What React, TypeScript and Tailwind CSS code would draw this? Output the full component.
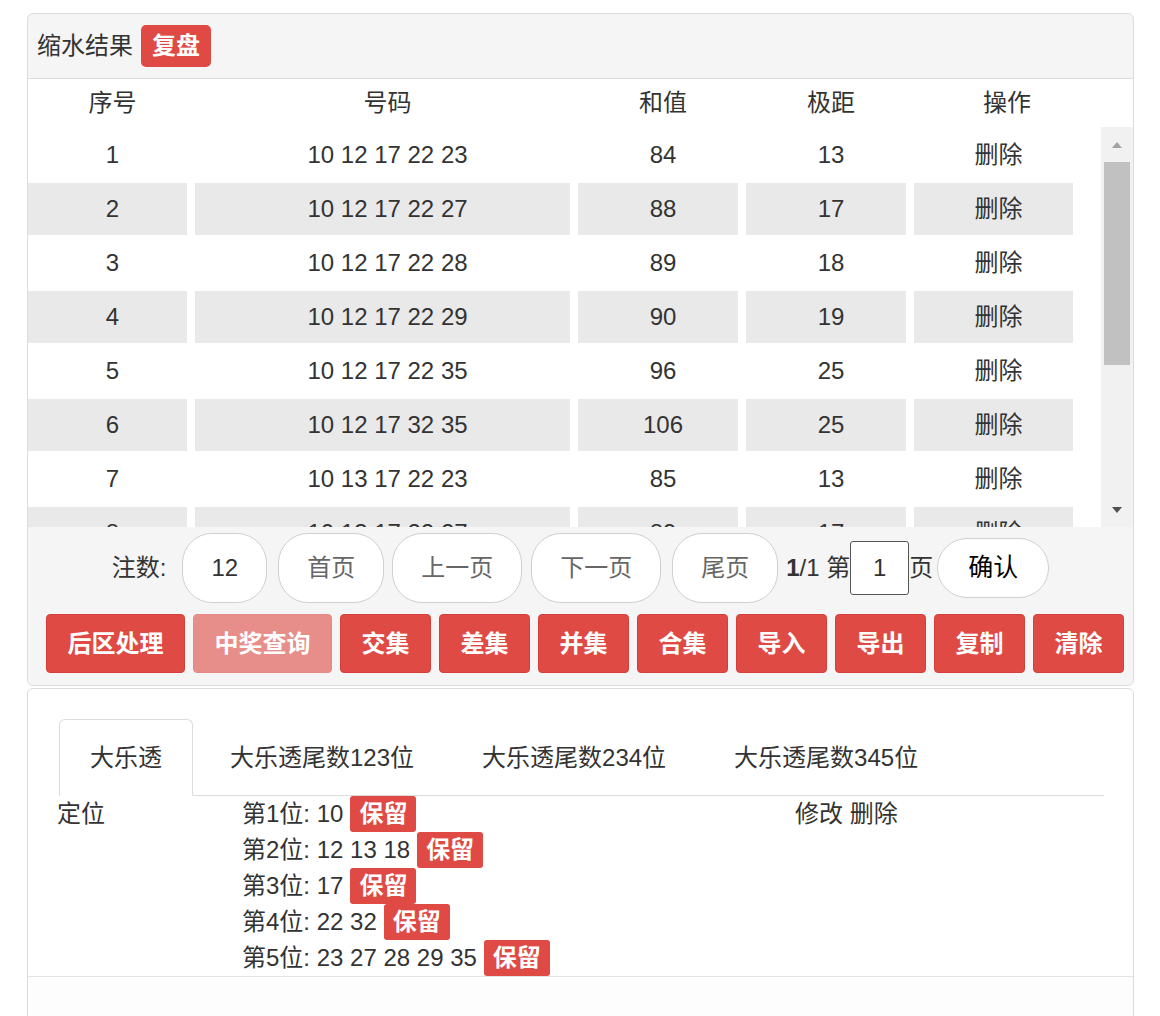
const rows = [
  { n: 1, code: '10 12 17 22 23', sum: 84, range: 13 },
  { n: 2, code: '10 12 17 22 27', sum: 88, range: 17 },
  { n: 3, code: '10 12 17 22 28', sum: 89, range: 18 },
  { n: 4, code: '10 12 17 22 29', sum: 90, range: 19 },
  { n: 5, code: '10 12 17 22 35', sum: 96, range: 25 },
  { n: 6, code: '10 12 17 32 35', sum: 106, range: 25 },
  { n: 7, code: '10 13 17 22 23', sum: 85, range: 13 },
  { n: 8, code: '10 13 17 22 27', sum: 89, range: 17 },
];

const actions = [
  { label: '后区处理', wide: true },
  { label: '中奖查询', wide: true, disabled: true },
  { label: '交集' },
  { label: '差集' },
  { label: '并集' },
  { label: '合集' },
  { label: '导入' },
  { label: '导出' },
  { label: '复制' },
  { label: '清除' },
];

const positions = [
  { label: '第1位', nums: '10' },
  { label: '第2位', nums: '12 13 18' },
  { label: '第3位', nums: '17' },
  { label: '第4位', nums: '22 32' },
  { label: '第5位', nums: '23 27 28 29 35' },
];

const tabs = ['大乐透', '大乐透尾数123位', '大乐透尾数234位', '大乐透尾数345位'];

function Pill({ children, dark = false, className = '' }: { children: React.ReactNode; dark?: boolean; className?: string }) {
  return (
    <button
      className={`h-[70px] px-[28px] rounded-[30px] border border-[#cfcfcf] bg-white ${dark ? 'text-[#333]' : 'text-[#666]'} ${className}`}
    >
      {children}
    </button>
  );
}

export default function App() {
  return (
    <div className="min-h-screen bg-white pt-[13px] pl-[27px] pr-[26px] font-[family-name:'Liberation_Sans','Noto_Sans_CJK_SC',sans-serif] text-[24px] text-[#333]">
      {/* result card */}
      <div className="rounded-[6px] border border-[#dcdcdc] overflow-hidden bg-[#f5f5f5]">
        <div className="h-[65px] flex items-center pl-[9px] border-b border-[#dcdcdc]">
          <span>缩水结果</span>
          <span className="ml-[8px] h-[42px] px-[11px] flex items-center rounded-[5px] bg-[#df4a44] text-white font-bold">
            复盘
          </span>
        </div>

        <div className="bg-white">
          <div className="h-[48px] grid grid-cols-[159px_375px_160px_160px_176px] gap-x-2 items-center">
            <div className="text-center pl-[10px]">序号</div>
            <div className="text-center pl-[10px]">号码</div>
            <div className="text-center pl-[10px]">和值</div>
            <div className="text-center pl-[10px]">极距</div>
            <div className="text-center pl-[10px]">操作</div>
          </div>

          <div className="flex h-[400px]">
            <div className="flex-1 overflow-hidden pt-[2px]">
              {rows.map((r) => {
                const cell = `h-[52px] flex items-center justify-center pl-[10px] ${r.n % 2 === 0 ? 'bg-[#e9e9ea]' : ''}`;
                return (
                  <div key={r.n} className="grid grid-cols-[159px_375px_160px_160px_159px] gap-x-2 mb-[2px]">
                    <div className={cell}>{r.n}</div>
                    <div className={cell}>{r.code}</div>
                    <div className={cell}>{r.sum}</div>
                    <div className={cell}>{r.range}</div>
                    <div className={cell}>删除</div>
                  </div>
                );
              })}
            </div>
            <div className="w-[32px] bg-[#f1f1f1] flex flex-col">
              <div className="h-[35px] flex items-center justify-center">
                <svg width="12" height="8" viewBox="0 0 12 8">
                  <path d="M6 1 L11 7 L1 7 Z" fill="#a3a3a3" />
                </svg>
              </div>
              <div className="h-[203px] mx-[3px] bg-[#c1c1c1]" />
              <div className="flex-1" />
              <div className="h-[35px] flex items-center justify-center">
                <svg width="12" height="8" viewBox="0 0 12 8">
                  <path d="M1 1 L11 1 L6 7 Z" fill="#505050" />
                </svg>
              </div>
            </div>
          </div>
        </div>

        <div className="pt-[6px] pb-[12px]">
          <div className="flex items-center justify-center h-[70px]">
            <span className="mr-[16px]">注数:</span>
            <Pill dark>12</Pill>
            <Pill className="ml-[11px]">首页</Pill>
            <Pill className="ml-[8px]">上一页</Pill>
            <Pill className="ml-[9px]">下一页</Pill>
            <Pill className="ml-[11px]">尾页</Pill>
            <span className="ml-[8px]">
              <b>1</b>/1 第
            </span>
            <span className="w-[59px] h-[54px] flex items-center justify-center border border-[#555] rounded-[3px] bg-white">
              1
            </span>
            <span>页</span>
            <button className="ml-[4px] h-[60px] w-[112px] rounded-[30px] border border-[#cfcfcf] bg-white text-black text-[25px]">
              确认
            </button>
          </div>

          <div className="mt-[11px] flex gap-2 pl-[18px]">
            {actions.map((a) => (
              <button
                key={a.label}
                className={`h-[59px] ${a.wide ? 'w-[139px]' : 'w-[91px]'} rounded-[4px] border text-white font-bold ${
                  a.disabled ? 'bg-[#e78e8b] border-[#e58a87]' : 'bg-[#df4a44] border-[#d43f3a]'
                }`}
              >
                {a.label}
              </button>
            ))}
          </div>
        </div>
      </div>

      {/* filter card */}
      <div className="mt-[2px] rounded-[6px] border border-[#dcdcdc] bg-white overflow-hidden">
        <div className="pt-[30px] ml-[31px] mr-[29px]">
          <div className="flex border-b border-[#dcdcdc]">
            {tabs.map((t, i) => (
              <div
                key={t}
                className={`h-[77px] px-[30px] mr-[6px] -mb-px flex items-center rounded-t-[6px] border ${
                  i === 0 ? 'border-[#dcdcdc] border-b-white bg-white' : 'border-transparent'
                }`}
              >
                {t}
              </div>
            ))}
          </div>
        </div>

        <div className="ml-[29px] flex">
          <div className="w-[185px] h-[36px] flex items-center">定位</div>
          <div className="w-[553px] flex flex-col">
            {positions.map((p) => (
              <div key={p.label} className="h-[36px] flex items-center">
                <span>
                  {p.label}: {p.nums}
                </span>
                <span className="ml-[7px] h-[36px] px-[9px] flex items-center rounded-[3px] bg-[#df4a44] text-white font-bold">
                  保留
                </span>
              </div>
            ))}
          </div>
          <div className="h-[36px] flex items-center">修改 删除</div>
        </div>

        <div className="border-t border-[#e4e4e4] bg-[#fdfdfd] h-[60px]" />
      </div>
    </div>
  );
}
